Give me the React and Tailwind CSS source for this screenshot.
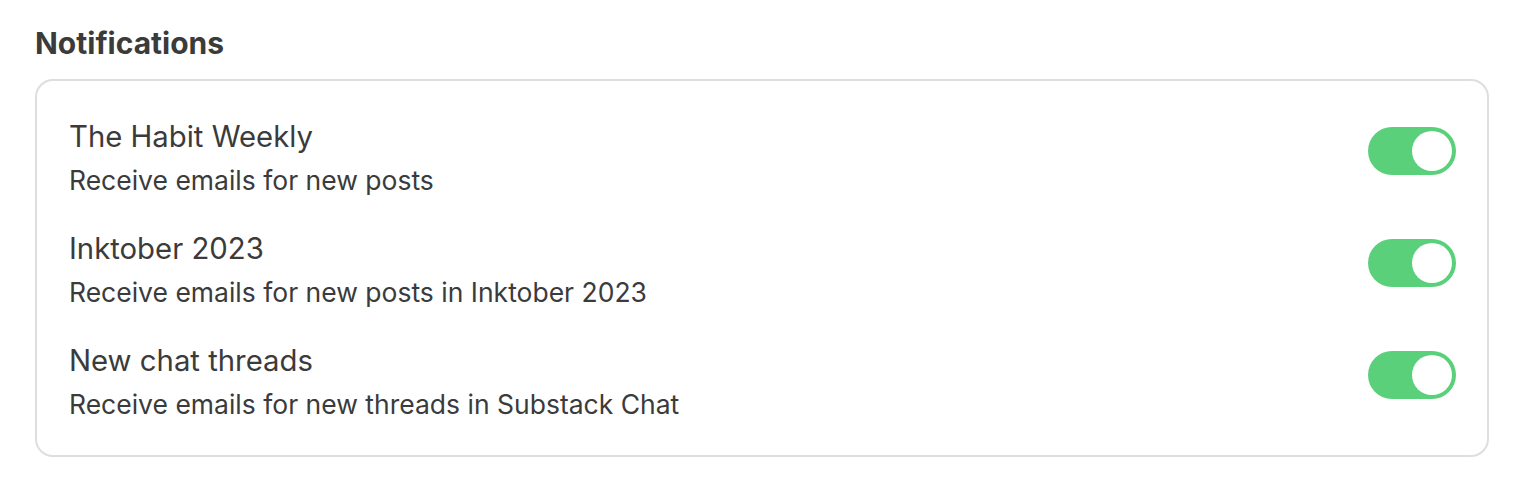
const rows = [
  { title: 'The Habit Weekly', desc: 'Receive emails for new posts' },
  { title: 'Inktober 2023', desc: 'Receive emails for new posts in Inktober 2023' },
  { title: 'New chat threads', desc: 'Receive emails for new threads in Substack Chat' },
];

function Toggle() {
  return (
    <div className="mt-[10px] flex h-[48px] w-[88px] shrink-0 items-center justify-end rounded-full bg-[#5ad07b] p-[4px]">
      <div className="h-[40px] w-[40px] rounded-full bg-white" />
    </div>
  );
}

export default function App() {
  return (
    <div className="min-h-[498px] bg-white pt-[25px] font-['Inter',sans-serif] text-[#3b3b3b]">
      <h2 className="ml-[35px] text-[30px] font-bold leading-[36px]">Notifications</h2>
      <div className="mt-[18px] ml-[35px] w-[1454px] rounded-[18px] border-2 border-[#dedede] pt-[36px] pb-[34px] pl-[32px] pr-[31px]">
        <div className="flex flex-col gap-[32px]">
          {rows.map((r) => (
            <div key={r.title} className="flex items-start justify-between">
              <div>
                <p className="text-[29.3px] leading-[40px]">{r.title}</p>
                <p className="mt-[6px] text-[26.5px] leading-[34px]">{r.desc}</p>
              </div>
              <Toggle />
            </div>
          ))}
        </div>
      </div>
    </div>
  );
}
